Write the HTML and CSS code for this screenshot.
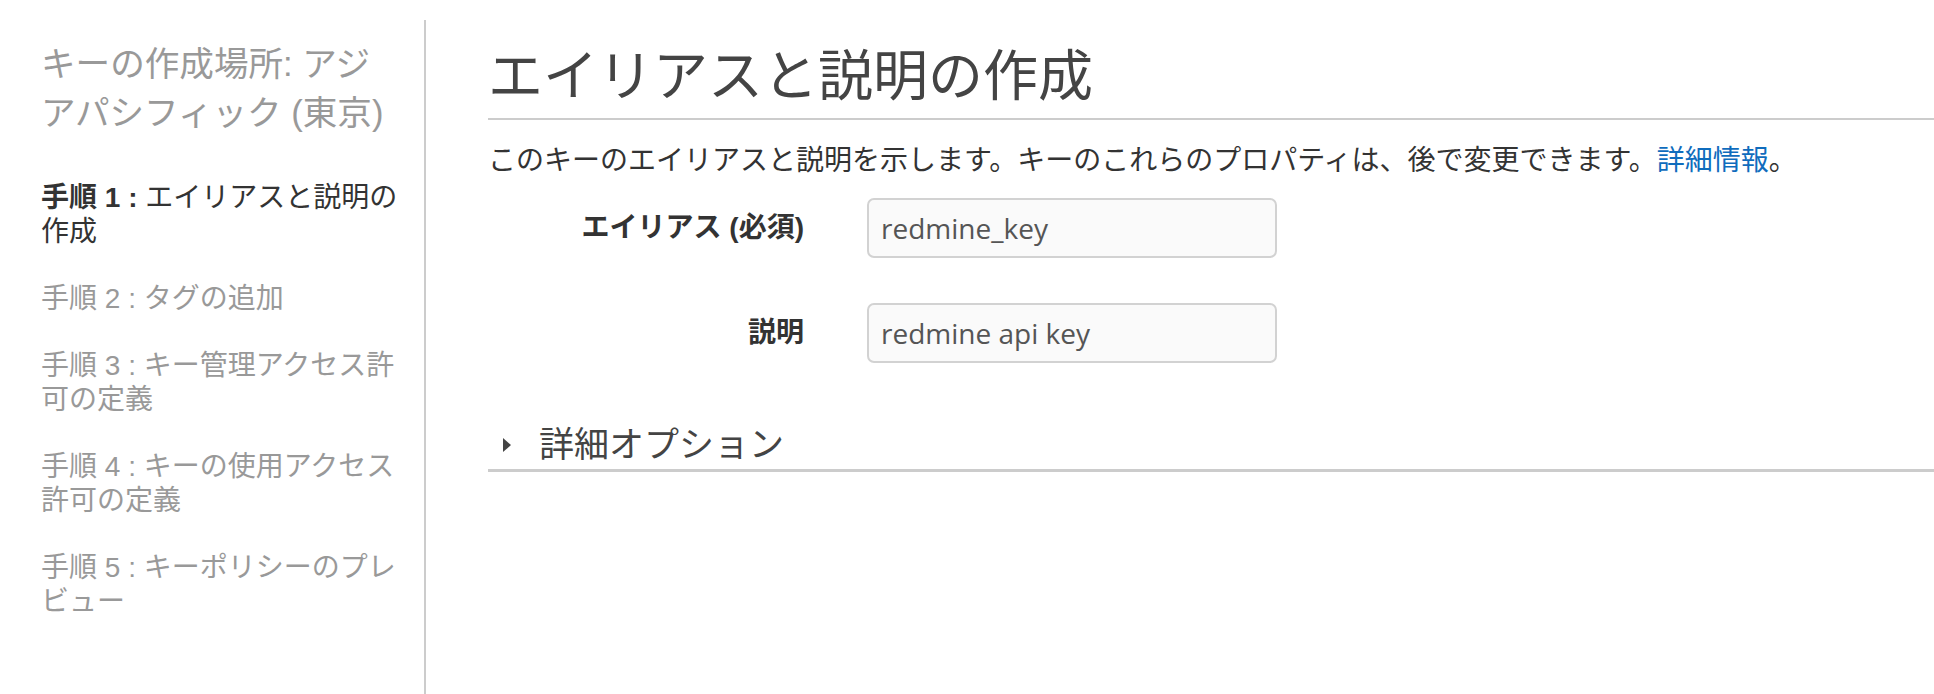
FILE: index.html
```html
<!DOCTYPE html>
<html lang="ja">
<head>
<meta charset="utf-8">
<title>エイリアスと説明の作成</title>
<link rel="stylesheet" href="styles.css">
</head>
<body>
<div class="page">
  <aside class="sidebar">
    <h2 class="region-title">キーの作成場所: アジアパシフィック (東京)</h2>
    <ol class="steps">
      <li class="step active"><b>手順 1 :</b> エイリアスと説明の作成</li>
      <li class="step">手順 2 : タグの追加</li>
      <li class="step">手順 3 : キー管理アクセス許可の定義</li>
      <li class="step">手順 4 : キーの使用アクセス許可の定義</li>
      <li class="step">手順 5 : キーポリシーのプレビュー</li>
    </ol>
  </aside>
  <main class="content">
    <h1 class="page-title">エイリアスと説明の作成</h1>
    <p class="intro">このキーのエイリアスと説明を示します。キーのこれらのプロパティは、後で変更できます。<a class="link" href="#">詳細情報</a>。</p>
    <div class="form">
      <div class="row">
        <span class="label">エイリアス (必須)</span>
        <div class="field">redmine_key</div>
      </div>
      <div class="row">
        <span class="label">説明</span>
        <div class="field">redmine api key</div>
      </div>
    </div>
    <div class="advanced">
      <span class="caret"></span>
      <span class="advanced-text">詳細オプション</span>
    </div>
  </main>
</div>
</body>
</html>
```

FILE: styles.css
```css
html, body {
  margin: 0;
  padding: 0;
  background: #ffffff;
}

body {
  font-family: "Liberation Sans", "Noto Sans CJK JP", sans-serif;
  color: #333333;
}

.page {
  display: flex;
  min-height: 100vh;
}

.sidebar {
  flex: 0 0 auto;
  width: 358px;
  margin-top: 20px;
  padding: 20px 25px 0 41px;
  border-right: 2px solid #cccccc;
}

.region-title {
  margin: 0;
  font-size: 34.6px;
  line-height: 49px;
  font-weight: normal;
  color: #999999;
}

.steps {
  list-style: none;
  margin: 43px 0 0 0;
  padding: 0;
  display: flex;
  flex-direction: column;
  gap: 33px;
}

.step {
  font-size: 28px;
  line-height: 34px;
  color: #999999;
}

.step.active {
  color: #333333;
}

.step b {
  font-weight: bold;
}

.content {
  flex: 1 1 auto;
  padding: 43px 0 0 62px;
}

.page-title {
  margin: 0;
  padding-bottom: 9px;
  font-size: 55px;
  line-height: 66px;
  font-weight: normal;
  color: #444444;
  border-bottom: 2px solid #cccccc;
}

.intro {
  margin: 24px 0 0 0;
  font-size: 28px;
  line-height: 34px;
  color: #333333;
}

.link {
  color: #0f6cbd;
  text-decoration: none;
}

.form {
  margin-top: 20px;
  display: flex;
  flex-direction: column;
  gap: 45px;
}

.row {
  display: grid;
  grid-template-columns: 316px 410px;
  column-gap: 63px;
  align-items: center;
}

.label {
  text-align: right;
  font-size: 28px;
  line-height: 34px;
  font-weight: bold;
  color: #333333;
}

.field {
  box-sizing: border-box;
  height: 60px;
  padding: 0 12px;
  border: 2px solid #d2d2d2;
  border-radius: 7px;
  background: #fafafa;
  font-family: "Open Sans", "Liberation Sans", sans-serif;
  font-size: 28px;
  line-height: 56px;
  color: #555555;
}

.advanced {
  margin-top: 61px;
  padding: 0 0 3px 15px;
  display: flex;
  align-items: center;
  gap: 28px;
  border-bottom: 3px solid #cccccc;
}

.caret {
  width: 0;
  height: 0;
  border-left: 8px solid #444444;
  border-top: 7px solid transparent;
  border-bottom: 7px solid transparent;
}

.advanced-text {
  font-size: 35px;
  line-height: 42px;
  color: #444444;
}
```
